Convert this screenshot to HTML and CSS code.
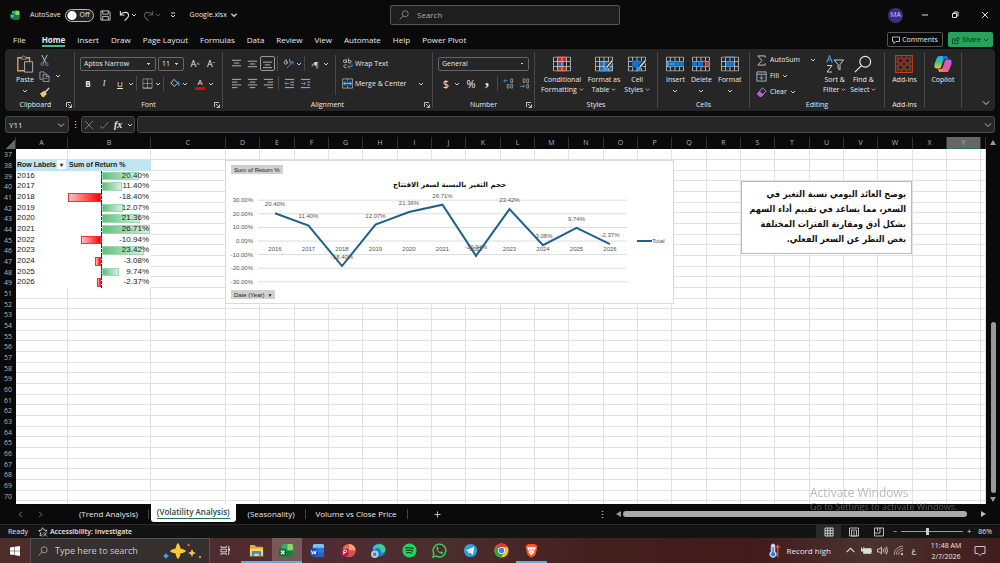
FILE: index.html
```
<!DOCTYPE html>
<html lang="en">
<head>
  <meta charset="UTF-8">
  <title>Google.xlsx - Excel</title>
  <link rel="stylesheet" href="styles.css">
</head>
<body>
  <svg class="defs" aria-hidden="true">
    <symbol id="chev" viewBox="0 0 6 6"><path d="M1 2l2 2 2-2" fill="none" stroke="currentColor"/></symbol>
    <symbol id="launch" viewBox="0 0 6 6"><path d="M5 .5H.5V5M2 2l3 3M5.500 2.500v3h-3" fill="none" stroke="currentColor" stroke-width=".8"/></symbol>
    <symbol id="glass" viewBox="0 0 20 20"><path d="M8 12L1 19" fill="none" stroke="currentColor" stroke-width="1.300"/><circle cx="12.500" cy="7.500" r="6" fill="none" stroke="currentColor" stroke-width="1.300"/></symbol>
    <symbol id="grid" viewBox="0 0 18 15"><path d="M.5.5h17v14H.5zM.5 5h17M.5 10h17M4.500.5v14M9 .5v14M13.500.5v14" fill="none" stroke="#b8b8b8" stroke-width=".9"/></symbol>
    <symbol id="excel" viewBox="0 0 16 16"><rect x="3" y="1" width="12" height="14" rx="2" fill="#2fae5f"/><path d="M9 1h4a2 2 0 012 2v5H9z" fill="#8bd86a"/><path d="M3 8h12v5a2 2 0 01-2 2H5a2 2 0 01-2-2z" fill="#1c7f42"/><rect y="6" width="8" height="8" rx="1.500" fill="#0f6b37"/><path d="M2.200 8l3.600 4M5.800 8l-3.600 4" stroke="#fff" stroke-width="1.200"/></symbol>
  </svg>

  <header class="titlebar">
    <div class="title-left">
      <svg class="app-icon"><use href="#excel"/></svg>
      <label class="autosave">AutoSave <input type="checkbox" class="toggle" role="switch"><span class="off">Off</span></label>
      <button class="tool save" aria-label="Save"><svg viewBox="0 0 12 12"><path d="M1 1h8.500L11 2.500V11H1zM3 1v3.500h6V1M3 11V7h6v4" fill="none" stroke="#ccc"/></svg></button>
      <button class="tool" aria-label="Undo"><svg viewBox="0 0 12 12"><path d="M1.500 1v4.500H6M1.500 5.500C4 1.500 10.500 1.500 10.500 6c0 2-2 3.500-4.500 5.500" fill="none" stroke="#ddd" stroke-width="1.200"/></svg></button>
      <svg class="chev"><use href="#chev"/></svg>
      <button class="tool dim" aria-label="Redo"><svg viewBox="0 0 12 12"><path d="M10.500 1v4.500H6M10.500 5.500C8 1.500 1.500 1.500 1.500 6c0 2 2 3.500 4.500 5.500" fill="none" stroke="#555" stroke-width="1.200"/></svg></button>
      <svg class="chev dim"><use href="#chev"/></svg>
      <button class="tool more" aria-label="Customize toolbar"><svg viewBox="0 0 6 6"><path d="M1 1h4M1 3l2 2 2-2" fill="none" stroke="#ddd"/></svg></button>
      <button class="filename">Google.xlsx <svg class="chev"><use href="#chev"/></svg></button>
    </div>
    <label class="search"><svg><use href="#glass"/></svg><input type="search" placeholder="Search" aria-label="Search"></label>
    <div class="title-right">
      <button class="avatar">MA</button>
      <button class="win" aria-label="Minimize"><svg viewBox="0 0 8 8"><path d="M1 4h6" stroke="#ddd"/></svg></button>
      <button class="win" aria-label="Restore"><svg viewBox="0 0 8 8"><path d="M1.500 2.500h4v4h-4zM3 2.500V1h4v4H5.500" fill="none" stroke="#ddd"/></svg></button>
      <button class="win" aria-label="Close"><svg viewBox="0 0 8 8"><path d="M1 1l6 6M7 1L1 7" stroke="#ddd"/></svg></button>
    </div>
  </header>

  <nav class="tabs">
    <a href="#" class="file">File</a><a href="#" class="active">Home</a><a href="#">Insert</a><a href="#">Draw</a><a href="#">Page Layout</a><a href="#">Formulas</a><a href="#">Data</a><a href="#">Review</a><a href="#">View</a><a href="#">Automate</a><a href="#">Help</a><a href="#">Power Pivot</a>
    <button class="comments"><svg viewBox="0 0 8 8"><path d="M.5 1h7v4.500H4l-2 2v-2H.5z" fill="none" stroke="#ddd" stroke-width=".8"/></svg>Comments</button>
    <button class="share"><svg viewBox="0 0 8 8"><path d="M3 3H.5v4.500H6V6M2.500 5.500c0-2 1-3 3-3V1l2 2.300-2 2.200V4c-1.500 0-2 .5-3 1.500z" fill="none" stroke="#103820" stroke-width=".8"/></svg>Share <svg class="chev"><use href="#chev"/></svg></button>
  </nav>

  <section class="ribbon">
    <div class="group clipboard">
      <div class="group-body">
        <button class="big"><svg viewBox="0 0 18 20"><path d="M5 3H1v14.500h7M11 3h3v4" fill="none" stroke="#e8a33d" stroke-width="1.500"/><path d="M4.500 4.500v-2H6L7.500.7 9 2.500h2v2z" fill="#262626" stroke="#bbb" stroke-width=".8"/><path d="M8.500 7.500h9v11.500h-9z" fill="#262626" stroke="#bbb"/></svg><span>Paste</span><svg class="chev"><use href="#chev"/></svg></button>
        <div class="col">
          <button aria-label="Cut"><svg class="i" viewBox="0 0 12 12"><path d="M3 0l4.500 8.500M9 0L4.500 8.500" stroke="#ccc" fill="none"/><circle cx="3.500" cy="10" r="1.500" fill="none" stroke="#3a96dd"/><circle cx="8.500" cy="10" r="1.500" fill="none" stroke="#3a96dd"/></svg></button>
          <button aria-label="Copy"><svg class="i" viewBox="0 0 12 12"><path d="M4 9H1V1h4.500L7 2.500M4.500 3.500h4l2.500 2.500v5.500H4.500zM8 3.500V6h3M6 8h3" fill="none" stroke="#bbb" stroke-width=".8"/></svg></button>
          <button aria-label="Format Painter"><svg class="i" viewBox="0 0 12 12"><path d="M1 7l4-2.500L8 8l-3 3.500L3 10z" fill="#f0c75e"/><path d="M5 4.500L8 8M7 5.500L11 1" stroke="#ddd" stroke-width="1.500"/></svg></button>
        </div>
        <svg class="chev mid"><use href="#chev"/></svg>
      </div>
      <h2>Clipboard</h2><svg class="launch"><use href="#launch"/></svg>
    </div>

    <div class="group font">
      <div class="group-body rows">
        <div class="row">
          <select class="font-name" aria-label="Font"><option>Aptos Narrow</option></select>
          <select class="font-size" aria-label="Font size"><option>11</option></select>
          <button class="glyph grow" aria-label="Increase font size">A<sup>^</sup></button>
          <button class="glyph grow" aria-label="Decrease font size">A<sup>ˇ</sup></button>
        </div>
        <div class="row">
          <button class="glyph"><b>B</b></button><button class="glyph serif"><i>I</i></button><button class="glyph"><u>U</u></button><svg class="chev"><use href="#chev"/></svg>
          <hr>
          <button class="glyph" aria-label="Borders"><svg class="i" viewBox="0 0 12 12"><path d="M1 1h10v10M1 1v10M6 1v10M1 6h10" fill="none" stroke="#999" stroke-width=".8"/><path d="M1 11h10" stroke="#ddd"/></svg></button><svg class="chev"><use href="#chev"/></svg>
          <hr>
          <button class="glyph" aria-label="Fill color"><svg class="i" viewBox="0 0 12 12"><path d="M5.500 1.500l4 4L6 9 2 5.500z" fill="none" stroke="#ccc"/><path d="M9.500 4c2 2 1.500 4 .5 4" fill="none" stroke="#3a96dd" stroke-width="1.500"/></svg></button><svg class="chev"><use href="#chev"/></svg>
          <button class="glyph color" aria-label="Font color">A</button><svg class="chev"><use href="#chev"/></svg>
        </div>
      </div>
      <h2>Font</h2><svg class="launch"><use href="#launch"/></svg>
    </div>

    <div class="group alignment">
      <div class="group-body">
        <div class="rows">
          <div class="row">
            <button class="glyph" aria-label="Top align"><svg class="i" viewBox="0 0 12 12"><path d="M1 2.500h10M3 5.500h6M1 8.500h10" stroke="#bbb"/></svg></button>
            <button class="glyph" aria-label="Middle align"><svg class="i" viewBox="0 0 12 12"><path d="M1 3.500h10M3 6.500h6M1 9.500h10" stroke="#bbb"/></svg></button>
            <button class="glyph on" aria-label="Bottom align"><svg class="i" viewBox="0 0 12 12"><path d="M1 4.500h10M3 7.500h6M1 10.500h10" stroke="#bbb"/></svg></button>
            <hr>
            <button class="glyph" aria-label="Orientation"><svg class="i" viewBox="0 0 12 12"><circle cx="3" cy="5" r="1.700" fill="none" stroke="#bbb"/><path d="M5 6l-2-5M7 1l1 5" fill="none" stroke="#bbb" stroke-width=".8"/><path d="M4 11l6.500-6.500M8 4h3v3" fill="none" stroke="#3a96dd"/></svg></button><svg class="chev"><use href="#chev"/></svg>
            <hr>
            <button class="glyph" aria-label="Text direction">›¶</button><svg class="chev"><use href="#chev"/></svg>
          </div>
          <div class="row">
            <button class="glyph" aria-label="Align left"><svg class="i" viewBox="0 0 12 12"><path d="M1 1.500h10M1 4.500h6M1 7.500h10M1 10.500h6" stroke="#bbb"/></svg></button>
            <button class="glyph" aria-label="Center"><svg class="i" viewBox="0 0 12 12"><path d="M1 1.500h10M3 4.500h6M1 7.500h10M3 10.500h6" stroke="#bbb"/></svg></button>
            <button class="glyph" aria-label="Align right"><svg class="i" viewBox="0 0 12 12"><path d="M1 1.500h10M5 4.500h6M1 7.500h10M5 10.500h6" stroke="#bbb"/></svg></button>
            <hr>
            <button class="glyph" aria-label="Decrease indent"><svg class="i" viewBox="0 0 12 12"><path d="M1 1.500h10M7 4.500h4M7 7.500h4M1 10.500h10" stroke="#bbb"/><path d="M6 6H1M3 4L1 6l2 2" fill="none" stroke="#3a96dd"/></svg></button>
            <button class="glyph" aria-label="Increase indent"><svg class="i" viewBox="0 0 12 12"><path d="M1 1.500h10M8 4.500h3M8 7.500h3M1 10.500h10" stroke="#bbb"/><path d="M1 6h5M4 4l2 2-2 2" fill="none" stroke="#3a96dd"/></svg></button>
          </div>
        </div>
        <div class="divider"></div>
        <div class="rows wrap">
          <div class="row"><button class="text"><svg class="i" viewBox="0 0 12 12"><circle cx="3" cy="3.500" r="1.500" fill="none" stroke="#bbb"/><path d="M4.700 1.500v4M7 0v5.500" stroke="#bbb" stroke-width=".9"/><circle cx="8.500" cy="4" r="1.500" fill="none" stroke="#bbb"/><path d="M5 7.500c-4-1-4 4 0 3" fill="none" stroke="#bbb"/><path d="M11 6v3.500H6.500M8.500 7.500l-2 2 2 2" fill="none" stroke="#3a96dd"/></svg>Wrap Text</button></div>
          <div class="row"><button class="text"><svg class="i" viewBox="0 0 12 12"><path d="M.5 1h11v10H.5zM6 1v2M6 9v2" fill="none" stroke="#bbb" stroke-width=".8"/><path d="M1 3.500h10v5H1z" fill="#17568c"/><path d="M2 6h8M3.500 4.500L2 6l1.500 1.500M8.500 4.500L10 6 8.500 7.500" fill="none" stroke="#6fbcf5"/></svg>Merge &amp; Center</button><svg class="chev"><use href="#chev"/></svg></div>
        </div>
      </div>
      <h2>Alignment</h2><svg class="launch"><use href="#launch"/></svg>
    </div>

    <div class="group number">
      <div class="group-body rows">
        <div class="row"><select class="format" aria-label="Number format"><option>General</option></select></div>
        <div class="row">
          <button class="glyph sym">$</button><svg class="chev"><use href="#chev"/></svg><button class="glyph sym percent">%</button><button class="glyph sym comma">,</button>
          <hr>
          <button class="glyph" aria-label="Increase decimal"><svg class="i" viewBox="0 0 12 12"><path d="M5 3H1M2.500 1.500L1 3l1.500 1.500" fill="none" stroke="#3a96dd"/><path d="M8.500 1h2v4h-2zM4.500 7h2v4h-2zM8.500 7h2v4h-2z" fill="none" stroke="#aaa" stroke-width=".8"/></svg></button>
          <button class="glyph" aria-label="Decrease decimal"><svg class="i" viewBox="0 0 12 12"><path d="M1 9h5M4.500 7.500L6 9l-1.500 1.500" fill="none" stroke="#3a96dd"/><path d="M4.500 1h2v4h-2zM8.500 1h2v4h-2zM8.500 7h2v4h-2z" fill="none" stroke="#aaa" stroke-width=".8"/></svg></button>
        </div>
      </div>
      <h2>Number</h2><svg class="launch"><use href="#launch"/></svg>
    </div>

    <div class="group styles">
      <div class="group-body">
        <button class="big"><svg viewBox="0 0 18 15"><path d="M4 0h9v5H4zM4 10h9v5H4z" fill="#d8261c"/><path d="M4 5h5v5H4z" fill="#1f6fc0"/><path d="M9 5h2v5H9z" fill="#d8261c"/><use href="#grid"/></svg><span>Conditional<br>Formatting <svg class="chev"><use href="#chev"/></svg></span></button>
        <button class="big"><svg viewBox="0 0 18 15"><path d="M4 5h14v10H4z" fill="#1673c4"/><use href="#grid"/><path d="M17.500 4l-6 7" stroke="#262626" stroke-width="3.500"/><path d="M17.500 4l-6 7" stroke="#ddd" stroke-width="1.500"/><path d="M12 10c-3 0-3 3-5.500 4.500 3 1 6 0 6.500-3z" fill="#3a9be8"/></svg><span>Format as<br>Table <svg class="chev"><use href="#chev"/></svg></span></button>
        <button class="big"><svg viewBox="0 0 18 15"><use href="#grid"/><path d="M4 4h10v7H4z" fill="#1673c4"/><path d="M17.500 4l-6 7" stroke="#262626" stroke-width="3.500"/><path d="M17.500 4l-6 7" stroke="#ddd" stroke-width="1.500"/><path d="M12 10c-3 0-3 3-5.500 4.500 3 1 6 0 6.500-3z" fill="#3a9be8"/></svg><span>Cell<br>Styles <svg class="chev"><use href="#chev"/></svg></span></button>
      </div>
      <h2>Styles</h2>
    </div>

    <div class="group cells">
      <div class="group-body">
        <button class="big"><svg viewBox="0 0 18 15"><use href="#grid"/><path d="M4 5h14v5H4z" fill="#1673c4"/><path d="M9 7.500H1M4 4L.8 7.500 4 11" fill="none" stroke="#3a9be8" stroke-width="1.500"/></svg><span>Insert</span><svg class="chev"><use href="#chev"/></svg></button>
        <button class="big"><svg viewBox="0 0 18 15"><use href="#grid"/><path d="M0 5h5v5H0zM6 5h5v5H6z" fill="#1673c4"/><path d="M12 4.500l6 6M18 4.500l-6 6" stroke="#e0443a" stroke-width="1.400"/></svg><span>Delete</span><svg class="chev"><use href="#chev"/></svg></button>
        <button class="big"><svg viewBox="0 0 18 15"><use href="#grid"/><path d="M5 5h8v5H5z" fill="#1673c4"/><path d="M4 .6h10" stroke="#3a9be8" stroke-width="1.200"/></svg><span>Format</span><svg class="chev"><use href="#chev"/></svg></button>
      </div>
      <h2>Cells</h2>
    </div>

    <div class="group editing">
      <div class="group-body">
        <div class="col lines">
          <button class="text"><svg class="i" viewBox="0 0 12 12"><path d="M10 3V1H2l4.500 5L2 11h8V9" fill="none" stroke="#ccc"/></svg>AutoSum<svg class="chev far"><use href="#chev"/></svg></button>
          <button class="text"><svg class="i" viewBox="0 0 12 12"><path d="M1 1h10v10H1zM1 3.500h10" fill="none" stroke="#bbb"/><path d="M6 4v5M4 7l2 2 2-2" fill="none" stroke="#3a96dd" stroke-width="1.200"/></svg>Fill <svg class="chev"><use href="#chev"/></svg></button>
          <button class="text"><svg class="i" viewBox="0 0 12 12"><path d="M7 1l4 3.500L6.500 10H4L1.500 7.500z" fill="none" stroke="#d08be0"/><path d="M4 4.500l4 3.500-2 2.500H4L1.500 8z" fill="#b65fcf"/></svg>Clear <svg class="chev"><use href="#chev"/></svg></button>
        </div>
        <button class="big sort"><svg viewBox="0 0 18 18"><path d="M.7 7.500L3.500.7l2.800 6.800M1.700 5h3.600" fill="none" stroke="#3a96dd" stroke-width="1.200"/><path d="M1 10.500h5L1 17h5" fill="none" stroke="#ccc"/><path d="M8 5h9.500L14 9.500V15l-2-1.500v-4z" fill="none" stroke="#ccc"/></svg><span>Sort &amp;<br>Filter <svg class="chev"><use href="#chev"/></svg></span></button>
        <button class="big"><svg><use href="#glass"/></svg><span>Find &amp;<br>Select <svg class="chev"><use href="#chev"/></svg></span></button>
      </div>
      <h2>Editing</h2>
    </div>

    <div class="group addins">
      <div class="group-body">
        <button class="big"><svg viewBox="0 0 18 18"><path d="M.7.7h16.600v16.600H.7z" fill="none" stroke="#c43e1c" stroke-width="1.200"/><path d="M3 3h5v5H3zM10 3h5v5h-5zM3 10h5v5H3zM10 10h5v5h-5z" fill="none" stroke="#c43e1c"/></svg><span>Add-ins</span></button>
      </div>
      <h2>Add-ins</h2>
    </div>

    <div class="group copilot">
      <div class="group-body">
        <button class="big"><svg viewBox="0 0 20 20">
          <defs>
            <linearGradient id="cp1" x1="0" y1="0" x2="0" y2="1"><stop offset="0" stop-color="#2aa7f0"/><stop offset=".5" stop-color="#35c78a"/><stop offset="1" stop-color="#f2c531"/></linearGradient>
            <linearGradient id="cp2" x1="1" y1="0" x2="0" y2="1"><stop offset="0" stop-color="#a46bf5"/><stop offset=".5" stop-color="#e855a0"/><stop offset="1" stop-color="#ff8a4c"/></linearGradient>
          </defs>
          <path d="M6 1h7c2 0 2 1.500 2.500 3.500h-3c-1.500 0-2 1-2.500 2.500L8 13c-.5 1.500-1 2-2.500 2H3c-3 0-3-3-2-6l2-5c.7-2 1.500-3 3-3z" fill="url(#cp1)"/>
          <path d="M14 19H7c-2 0-2-1.500-2.500-3.500h3c1.500 0 2-1 2.500-2.500L12 7c.5-1.500 1-2 2.500-2H17c3 0 3 3 2 6l-2 5c-.7 2-1.500 3-3 3z" fill="url(#cp2)"/>
          <path d="M9.500 1H13c2 0 2 1.500 2.500 3.500h-3c-1 0-1.700.5-2 1z" fill="#2467d8"/></svg><span>Copilot</span></button>
      </div>
    </div>
    <button class="collapse" aria-label="Collapse ribbon"><svg viewBox="0 0 8 8"><path d="M1 2.500l3 3 3-3" fill="none" stroke="#ddd"/></svg></button>
  </section>

  <div class="formula-bar">
    <label class="name-box"><input type="text" value="Y11" aria-label="Name box"><svg viewBox="0 0 8 8"><path d="M1 2.500l3 3 3-3" fill="none" stroke="#bbb"/></svg></label>
    <span class="dots">⋮</span>
    <div class="fx-box">
      <button aria-label="Cancel"><svg viewBox="0 0 10 10"><path d="M1 1l8 8M9 1L1 9" stroke="#777"/></svg></button>
      <button aria-label="Enter"><svg viewBox="0 0 10 10"><path d="M1 6l2.500 2.500L9.500 2" fill="none" stroke="#777"/></svg></button>
      <button class="fx">fx</button>
      <svg class="chev"><use href="#chev"/></svg>
    </div>
    <label class="formula"><input type="text" aria-label="Formula"><svg viewBox="0 0 8 8"><path d="M1 2.500l3 3 3-3" fill="none" stroke="#bbb"/></svg></label>
  </div>

  <main class="workspace">
    <div class="sheet">
      <table id="grid-table" class="cells-table"></table>

      <section class="chart">
        <button class="field">Sum of Return %</button>
        <h3 dir="rtl">حجم التغير بالنسبة لسعر الافتتاح</h3>
        <svg id="plot" viewBox="0 0 447 96"></svg>
        <button class="field">Date (Year) <span>▼</span></button>
      </section>

      <p class="note" dir="rtl">يوضح العائد اليومي نسبة التغير في<br>السعر، مما يساعد في تقييم أداء السهم<br>بشكل أدق ومقارنة الفترات المختلفة<br>بغض النظر عن السعر الفعلي.</p>
    </div>
    <div class="vscroll"><span class="arrow up"></span><span class="track"><span class="thumb"></span></span><span class="arrow down"></span></div>
  </main>

  <nav class="sheet-tabs">
    <button class="step" aria-label="Previous sheet"><svg viewBox="0 0 8 8"><path d="M5.500 1l-3 3 3 3" fill="none" stroke="#888"/></svg></button>
    <button class="step" aria-label="Next sheet"><svg viewBox="0 0 8 8"><path d="M2.500 1l3 3-3 3" fill="none" stroke="#888"/></svg></button>
    <a href="#" class="first">(Trend Analysis)</a>
    <a href="#" class="active"><span>(Volatility Analysis)</span></a>
    <a href="#">(Seasonality)</a>
    <a href="#">Volume vs Close Price</a>
    <button class="add" aria-label="New sheet"><svg viewBox="0 0 8 8"><path d="M4 .5v7M.5 4h7" stroke="#ccc"/></svg></button>
    <div class="hscroll"><span class="dots">⋮</span><span class="arrow left"></span><span class="bar"></span><span class="arrow right"></span></div>
  </nav>

  <footer class="status">
    <span>Ready</span>
    <button class="access"><svg viewBox="0 0 10 10"><path d="M4.500.7L6 3l3 .3L7 5.500M4.500.7L3.300 3.300.7 3.500l2 2L2 9l2.500-1.500M5 5.500l4 4M9 5.500l-4 4" fill="none" stroke="#ccc" stroke-width=".9"/></svg>Accessibility: Investigate</button>
    <div class="views">
      <button class="on" aria-label="Normal"><svg viewBox="0 0 10 10"><path d="M1 1h8v8H1zM3.700 1v8M6.300 1v8M1 3.700h8M1 6.300h8" fill="none" stroke="#ddd" stroke-width=".9"/></svg></button>
      <button aria-label="Page layout"><svg viewBox="0 0 10 10"><path d="M.5 1h9v8h-9zM2.500 3h5v6h-5zM4 5h2M4 7h2" fill="none" stroke="#ccc" stroke-width=".9"/></svg></button>
      <button aria-label="Page break preview"><svg viewBox="0 0 10 10"><path d="M.5 1h9v8h-9zM.5 6H6V1M3.500 1v3" fill="none" stroke="#ccc" stroke-width=".9"/></svg></button>
    </div>
    <div class="zoom"><span>−</span><input type="range" min="10" max="190" value="86" aria-label="Zoom"><span>+</span><span class="pct">86%</span></div>
  </footer>

  <div class="watermark"><p>Activate Windows</p><small>Go to Settings to activate Windows.</small></div>

  <footer class="taskbar">
    <button class="start" aria-label="Start"><svg viewBox="0 0 10 10"><path d="M0 1.400L4.500.8v3.900H0zM5 .7L10 0v4.700H5zM0 5.200h4.500v3.900L0 8.500zM5 5.200h5V10l-5-.7z" fill="#fff"/></svg></button>
    <label class="task-search"><svg><use href="#glass"/></svg><input type="search" placeholder="Type here to search" aria-label="Type here to search">
      <svg class="sparkle" viewBox="0 0 40 16"><path d="M15 0q1.500 1 2.500 5.500Q22 6.500 23 8q-1 1.500-5.500 2.500Q16.500 15 15 16q-1.500-1-2.500-5.500Q8 9.500 7 8q1-1.500 5.500-2.500Q13.500 1 15 0z" fill="#f9c932"/><path d="M29 6l1.200 2.800L33 10l-2.800 1.200L29 14l-1.200-2.800L25 10l2.800-1.200z" fill="#f5c34a"/><path d="M3 10l1.200 1.800L6 13l-1.800 1.200L3 16l-1.200-1.800L0 13l1.800-1.200z" fill="#39a7e8"/><circle cx="25.500" cy="2" r="1.300" fill="#d8573c"/><circle cx="37" cy="14" r="1.200" fill="#b5a33b"/></svg></label>
    <button class="taskview" aria-label="Task view"><svg viewBox="0 0 12 12"><path d="M1 1v1.500h6V1M1 11V9.500h6V11M1 4.500h6v3H1zM9.500 1v10" fill="none" stroke="#ddd"/><path d="M9 4h2v2H9z" fill="#ddd"/></svg></button>
    <div class="apps">
      <button class="run" aria-label="File Explorer"><svg viewBox="0 0 16 16"><path d="M1 3a1 1 0 011-1h4l1.500 2H14a1 1 0 011 1v9H1z" fill="#e9a825"/><path d="M1 6h14v8H1z" fill="#fcd462"/><path d="M3 14V10a1.500 1.500 0 011.500-1.500h7A1.500 1.500 0 0113 10v4h-2.500v-2.500h-5V14z" fill="#3a8fd8"/></svg></button>
      <button class="run open" aria-label="Excel"><svg viewBox="0 0 16 16"><use href="#excel"/></svg></button>
      <button aria-label="Word"><svg viewBox="0 0 16 16"><rect x="3" y="1" width="12" height="14" rx="2" fill="#2b7cd3"/><path d="M3 5V3a2 2 0 012-2h8a2 2 0 012 2v2z" fill="#7cc0f8"/><path d="M3 10h12v3a2 2 0 01-2 2H5a2 2 0 01-2-2z" fill="#2462d8"/><rect y="6" width="8" height="8" rx="1.500" fill="#1750b0"/><path d="M1.500 8l1.200 4L4 8.500 5.300 12l1.200-4" fill="none" stroke="#fff"/></svg></button>
      <button aria-label="PowerPoint"><svg viewBox="0 0 16 16"><circle cx="8.500" cy="8" r="7" fill="#ed6c47"/><path d="M8.500 1a7 7 0 017 7h-7z" fill="#ff9e7a"/><path d="M8.500 8h7a7 7 0 01-7 7z" fill="#e0485a"/><rect y="6" width="8" height="8" rx="1.500" fill="#b01245"/><path d="M3 12.500v-5h1.500a1.400 1.400 0 010 2.800H3" fill="none" stroke="#fff"/></svg></button>
      <button aria-label="Edge"><svg viewBox="0 0 16 16"><circle cx="8.500" cy="7.500" r="7" fill="#1480cf"/><path d="M2 6c1-6 13-7 13.500 1 0 3-3 4-5 3 1-2-1-5-4-5-2 0-3.500.5-4.500 1z" fill="#42cf8c"/><path d="M2 6c2-5 9-5 10-1-2-1-4-2-6 0S2 7 2 6z" fill="#36c0dd"/><circle cx="4" cy="12" r="4" fill="#b9cad6"/><path d="M2.500 10.500h3v3h-3z" fill="#4a7890"/></svg></button>
      <button aria-label="Spotify"><svg viewBox="0 0 16 16"><circle cx="8" cy="8" r="7.500" fill="#1ed760"/><path d="M3.500 5.500c3-1 6.500-.6 9 .8M4 8c2.500-.8 5.500-.5 7.700.8M4.500 10.500c2-.6 4.300-.4 6.200.7" fill="none" stroke="#173a23" stroke-width="1.300"/></svg></button>
      <button aria-label="WhatsApp"><svg viewBox="0 0 16 16"><path d="M1 15l1-3.700A6.800 6.800 0 114.700 14z" fill="none" stroke="#3ccf62" stroke-width="1.500"/><path d="M5 4.500c1-1 1.500 0 2 1.500L6 7.200c.6 1.200 1.500 2 2.700 2.600L10 8.800c1.500.7 2 1 1.500 2C9.500 13 3.500 8 5 4.500z" fill="#3ccf62"/></svg></button>
      <button aria-label="Telegram"><svg viewBox="0 0 16 16"><circle cx="8" cy="8" r="7" fill="#2ba0dc"/><path d="M3 8l9-4-1.500 8.500L7.500 10 6 11.500V9z" fill="#fff"/><path d="M6 9l5-4-3.500 5z" fill="#bcdcf0"/></svg></button>
      <button aria-label="Chrome"><svg viewBox="0 0 16 16"><circle cx="8" cy="8" r="7.500" fill="#fbc116"/><path d="M8 8L1.500 4.200A7.500 7.500 0 0114.500 4.500H8z" fill="#e33b2e"/><path d="M8 8l-6.500-3.800A7.500 7.500 0 007.500 15.500L11 9.500z" fill="#2ba24c"/><circle cx="8" cy="8" r="3.700" fill="#fff"/><circle cx="8" cy="8" r="2.900" fill="#3f7fe8"/></svg></button>
      <button class="run" aria-label="Brave"><svg viewBox="0 0 16 16"><path d="M4.500 1h7l1.500 1.500 1.500.5-.7 2 .2 1-2 7L8 15.700 4 13 2 6l.2-1-.7-2L3 2.500z" fill="#fb542b"/><path d="M4 4l2 .5L8 4l2 .5 2-.5.5 1.500-1.700 3L11 10l-3 3-3-3 .2-1.500-1.700-3z" fill="#fff"/><path d="M5.500 6l1.700.8L6.500 9zM10.500 6l-1.700.8.7 2.200zM8 9l1 1.500H7z" fill="#fb542b"/></svg></button>
    </div>
    <div class="tray">
      <button class="weather"><svg viewBox="0 0 12 16"><path d="M3 3a2 2 0 014 0v6a3.500 3.500 0 11-4 0z" fill="#e8eef4" stroke="#a9c6e8" stroke-width=".8"/><path d="M5 4v8" stroke="#2c7be0" stroke-width="1.500"/><circle cx="5" cy="12" r="2.300" fill="#2c7be0"/><path d="M10 15V3M8 5l2-2.500L12 5" fill="none" stroke="#d4552a" stroke-width="1.500"/></svg>Record high</button>
      <button aria-label="Hidden icons"><svg viewBox="0 0 10 10"><path d="M1.500 6.500L5 3l3.500 3.500" fill="none" stroke="#ddd"/></svg></button>
      <button aria-label="Battery"><svg viewBox="0 0 10 10"><path d="M2.500 3.500H9v4H2.500z" fill="#ddd" stroke="#ddd"/><path d="M9.800 4.500v2M.5 2v2M2.500 2v2M0 4h3v1.500H0z" stroke="#ddd" fill="#ddd" stroke-width=".8"/></svg></button>
      <button aria-label="Volume"><svg viewBox="0 0 10 10"><path d="M.5 3.700H2L4 2v6L2 6.300H.5zM5.500 3.500q1 1.500 0 3M7 2.500q1.800 2.500 0 5M8.500 1.500q2.400 3.500 0 7" fill="none" stroke="#ddd" stroke-width=".8"/></svg></button>
      <button aria-label="Network"><svg viewBox="0 0 10 10"><path d="M1 9a8 8 0 018-8M3 9a6 6 0 016-6M5 9a4 4 0 014-4" fill="none" stroke="#aaa" stroke-width=".8"/><path d="M7 9a2 2 0 012-2v2z" fill="#ccc"/></svg></button>
      <button class="lang">ع</button>
      <time>11:48 AM<br>2/7/2026</time>
      <button class="notify" aria-label="Notifications"><svg viewBox="0 0 12 12"><path d="M1 1.500h10v7H8L6 10.500l-2-2H1z" fill="none" stroke="#ccc"/></svg></button>
    </div>
  </footer>

  <script>
    const returns = [
      [2016, 20.40], [2017, 11.40], [2018, -18.40], [2019, 12.07], [2020, 21.36], [2021, 26.71],
      [2022, -10.94], [2023, 23.42], [2024, -3.08], [2025, 9.74], [2026, -2.37]
    ];
    const columns = 'ABCDEFGHIJKLMNOPQRSTUVWXY'.split('');
    const MAX = 26.71;

    // Spreadsheet grid, row 50 is hidden
    function buildGrid() {
      let html = '<colgroup><col class="c-head"><col class="c-a"><col class="c-b"><col class="c-c">';
      for (let i = 3; i < columns.length; i++) html += `<col class="${(i - 3) % 3 === 1 ? 'c-wide' : 'c-std'}">`;
      html += '<col></colgroup><thead><tr><th class="corner"></th>';
      columns.forEach(c => html += `<th${c === 'Y' ? ' class="selected"' : ''}>${c}</th>`);
      html += '<th></th></tr></thead><tbody>';
      for (let r = 37; r <= 71; r++) {
        if (r === 50) continue;
        const item = returns[r - 39];
        let a = '<td></td>', b = '<td></td>';
        if (r === 38) {
          a = '<td class="head">Row Labels<button aria-label="Filter">▾</button></td>';
          b = '<td class="head">Sum of Return %</td>';
        } else if (item) {
          const v = item[1];
          const w = Math.abs(v) / MAX * 59;
          a = `<td class="plain">${item[0]}</td>`;
          b = `<td class="plain value"><span class="bar ${v < 0 ? 'neg' : 'pos'}" style="width:${w}%"></span><span class="num">${v.toFixed(2)}%</span></td>`;
        }
        html += `<tr><th>${r}</th>${a}${b}${'<td></td>'.repeat(columns.length - 1)}</tr>`;
      }
      document.getElementById('grid-table').innerHTML = html + '</tbody>';
    }

    function buildPlot() {
      const x = i => 49 + i * 33.5;
      const y = v => 51 - v * 1.36;
      let svg = '';
      for (let v = 30; v >= -30; v -= 10) {
        svg += `<line class="rule" x1="32" x2="401" y1="${y(v)}" y2="${y(v)}"/>`;
        svg += `<text class="axis" x="27" y="${y(v) + 2}">${v.toFixed(2)}%</text>`;
      }
      svg += `<polyline points="${returns.map((d, i) => x(i) + ',' + y(d[1])).join(' ')}"/>`;
      returns.forEach((d, i) => {
        svg += `<text x="${x(i)}" y="61">${d[0]}</text>`;
        svg += `<text x="${x(i)}" y="${y(d[1]) - 7}">${d[1].toFixed(2)}%</text>`;
      });
      svg += '<line class="key" x1="411" x2="426" y1="51" y2="51"/><text class="legend" x="426" y="53">Total</text>';
      document.getElementById('plot').innerHTML = svg;
    }

    buildGrid();
    buildPlot();
  </script>
</body>
</html>
```
FILE: styles.css
```
* {
  box-sizing: border-box;
}
body {
  margin: 0;
  height: 100vh;
  display: flex;
  flex-direction: column;
  overflow: hidden;
  background: #0a0a0a;
  color: #e8e8e8;
  font: 7px/10px "Open Sans", "Noto Sans", sans-serif;
}
button, input, select {
  font: inherit;
  color: inherit;
  background: none;
  border: 0;
  padding: 0;
  margin: 0;
  outline: 0;
}
button {
  display: flex;
  align-items: center;
  justify-content: center;
}
input::placeholder {
  color: inherit;
  opacity: 1;
}
a {
  color: inherit;
  text-decoration: none;
}
svg {
  flex: none;
}
h2, h3, p {
  margin: 0;
  font-size: inherit;
  font-weight: 400;
}
.defs {
  position: absolute;
  width: 0;
  height: 0;
}
.chev {
  width: 6px;
  height: 6px;
  color: #ccc;
}
.i {
  width: 11px;
  height: 11px;
}

/* title bar */
.titlebar {
  display: flex;
  align-items: center;
  height: 30px;
  padding-left: 10px;
}
.title-left, .title-right {
  flex: 1;
  display: flex;
  align-items: center;
}
.app-icon {
  width: 10px;
  height: 10px;
  margin-right: 10px;
}
.autosave {
  display: flex;
  align-items: center;
  gap: 4px;
  position: relative;
}
.toggle {
  appearance: none;
  width: 29px;
  height: 13px;
  border: 1px solid #bbb;
  border-radius: 7px;
  background: radial-gradient(circle at 6px 50%, #fff 4px, transparent 5px) #222;
}
.off {
  position: absolute;
  right: 4px;
}
.tool svg {
  width: 11px;
  height: 11px;
}
.tool.save {
  margin: 0 8px 0 6px;
}
.tool + .chev {
  margin: 0 6px 0 1px;
}
.tool.more {
  margin: 0 14px 0 3px;
}
.tool.more svg {
  width: 6px;
  height: 6px;
}
.chev.dim {
  color: #555;
}
.filename {
  gap: 3px;
}
.filename .chev {
  width: 8px;
  height: 8px;
}
.search {
  display: flex;
  align-items: center;
  gap: 8px;
  width: 230px;
  height: 20px;
  padding: 0 8px;
  border: 1px solid #555;
  border-radius: 2px;
  background: #1e1e1e;
  color: #aaa;
}
.search svg {
  width: 10px;
  height: 10px;
}
.search input {
  flex: 1;
  font-size: 8px;
}
.title-right {
  justify-content: flex-end;
}
.avatar {
  width: 15px;
  height: 15px;
  margin-right: 7px;
  border-radius: 50%;
  background: #3b2e83;
  color: #cfc8ff;
}
.win {
  width: 30px;
  height: 20px;
}
.win svg {
  width: 8px;
  height: 8px;
}

/* ribbon tabs */
.tabs {
  display: flex;
  align-items: center;
  gap: 12px;
  height: 19px;
  padding: 0 7px 0 13px;
}
.tabs a {
  height: 14px;
  padding-top: 2px;
  border-bottom: 2px solid transparent;
  font-size: 8px;
  white-space: nowrap;
}
.tabs .file {
  margin-right: 4px;
}
.tabs .active {
  font-weight: 700;
  border-color: #4fb87f;
}
.comments, .share {
  height: 15px;
  gap: 2px;
  border-radius: 2px;
}
.comments {
  width: 56px;
  margin-left: auto;
  border: 1px solid #555;
}
.share {
  width: 45px;
  margin-left: -7px;
  background: #27a35b;
  color: #0c2c18;
}
.comments svg, .share svg {
  width: 8px;
  height: 8px;
}
.share .chev {
  width: 6px;
  color: #0c2c18;
}

/* ribbon */
.ribbon {
  position: relative;
  display: flex;
  height: 62px;
  margin: 0 5px;
  padding: 3px 0;
  border-radius: 4px;
  background: #262626;
}
.group {
  position: relative;
  display: flex;
  flex-direction: column;
  border-right: 1px solid #484848;
}
.group-body {
  flex: none;
  display: flex;
  height: 48px;
}
.group h2 {
  line-height: 10px;
  text-align: center;
}
.launch {
  position: absolute;
  right: 2px;
  bottom: 0;
  width: 6px;
  height: 6px;
}
.rows {
  display: flex;
  flex-direction: column;
  gap: 5px;
  padding-top: 4px;
}
.row {
  display: flex;
  align-items: center;
  height: 15px;
}
.row hr {
  width: 1px;
  height: 15px;
  margin: 0 2px;
  border: 0;
  background: #484848;
}
.glyph {
  width: 16px;
  height: 15px;
  font-size: 8px;
}
.glyph.serif {
  font-family: "Liberation Serif", serif;
}
.glyph.on {
  width: 15px;
  border: 1px solid #999;
  border-radius: 2px;
}
.glyph.grow {
  font-size: 9px;
}
.glyph sup {
  font-size: 6px;
}
.glyph.sym {
  font-size: 11px;
}
.glyph.percent {
  margin-left: 3px;
}
.glyph.comma {
  font: 700 16px/4px "Liberation Serif", serif;
  padding-bottom: 6px;
}
.glyph.color {
  width: 10px;
  height: 13px;
  margin: 0 3px 0 7px;
  border-bottom: 3px solid #e00;
}
.text {
  gap: 3px;
}
.big {
  flex-direction: column;
  justify-content: flex-start;
  line-height: 10px;
}
.big > svg:first-child {
  width: 18px;
  height: 18px;
  margin: 3px 0 2px;
}
.big > .chev {
  margin-top: 3px;
}
.big span .chev {
  width: 5px;
  height: 5px;
}
.col {
  display: flex;
  flex-direction: column;
  justify-content: space-around;
}
select {
  appearance: none;
  height: 14px;
  padding: 0 3px;
  border: 1px solid #666;
  border-radius: 2px;
  background: linear-gradient(45deg, transparent 50%, #ccc 50%) right 6px center / 2px 2px no-repeat,
    linear-gradient(-45deg, transparent 50%, #ccc 50%) right 4px center / 2px 2px no-repeat;
}
.clipboard {
  width: 70px;
}
.clipboard .group-body {
  gap: 5px;
  padding-left: 11px;
}
.clipboard .mid {
  align-self: center;
}
.clipboard h2 {
  padding-right: 8px;
}
.font {
  width: 148px;
}
.font .group-body {
  padding-left: 5px;
}
.font-name {
  width: 76px;
  margin-right: 2px;
}
.font-size {
  width: 26px;
  margin-right: 3px;
}
.alignment {
  width: 210px;
}
.alignment .group-body {
  padding-left: 5px;
}
.alignment .rows {
  width: 107px;
}
.divider {
  width: 1px;
  height: 40px;
  margin-top: 3px;
  background: #484848;
}
.alignment .wrap {
  width: 96px;
  padding-left: 6px;
}
.alignment .wrap .text {
  gap: 2px;
}
.alignment .wrap .chev {
  margin-left: 12px;
}
.number {
  width: 102px;
}
.number .group-body {
  padding-left: 5px;
}
.format {
  width: 91px;
}
.styles {
  width: 123px;
}
.styles .group-body {
  gap: 4px;
  padding-left: 6px;
}
.cells {
  width: 92px;
}
.cells .group-body {
  gap: 6px;
  padding-left: 8px;
}
.editing {
  width: 135px;
}
.editing .group-body {
  padding-left: 6px;
}
.lines {
  width: 67px;
  align-items: flex-start;
}
.far {
  margin-left: 7px;
}
.sort {
  margin-right: 4px;
}
.addins {
  width: 40px;
}
.copilot {
  width: 37px;
}
.addins .group-body, .copilot .group-body {
  justify-content: center;
}
.collapse {
  margin: auto 5px 0 auto;
  height: 10px;
}
.collapse svg {
  width: 8px;
  height: 8px;
}

/* formula bar */
.formula-bar {
  display: flex;
  height: 17px;
  margin: 5px 5px 4px;
}
.name-box, .fx-box, .formula {
  display: flex;
  align-items: center;
  border: 1px solid #484848;
  border-radius: 3px;
  background: #262626;
}
.name-box {
  width: 64px;
  padding: 0 3px;
}
.name-box input, .formula input {
  flex: 1;
  min-width: 0;
  font-size: 8px;
}
.name-box svg, .formula svg {
  width: 8px;
  height: 8px;
}
.dots {
  width: 12px;
  font-size: 9px;
  line-height: 17px;
  text-align: center;
}
.fx-box {
  width: 54px;
  margin-right: 2px;
  padding: 0 2px;
  gap: 5px;
}
.fx-box button svg {
  width: 10px;
  height: 10px;
}
.fx {
  font: italic 700 10px "Liberation Serif", serif;
}
.formula {
  flex: 1;
  padding: 0 2px;
}

/* sheet */
.workspace {
  flex: 1;
  min-height: 0;
  display: flex;
}
.sheet {
  position: relative;
  flex: 1;
  overflow: hidden;
  background: #fff;
  color: #222;
}
.cells-table {
  width: 100%;
  table-layout: fixed;
  border-collapse: separate;
  border-spacing: 0;
}
.c-head { width: 16px; }
.c-a { width: 52px; }
.c-b { width: 83px; }
.c-c { width: 75px; }
.c-std { width: 34px; }
.c-wide { width: 35px; }
.cells-table th {
  padding: 0;
  background: #0a0a0a;
  color: #b4b4b4;
  font-weight: 400;
  font-size: 7px;
  line-height: 10px;
}
.cells-table thead th {
  height: 12px;
  border-right: 1px solid #333;
}
.cells-table thead .selected {
  background: #666;
  border-bottom: 1px solid #21734a;
}
.cells-table thead .corner {
  background: linear-gradient(135deg, #0a0a0a 65%, #666 65%);
}
.cells-table td {
  height: 11px;
  padding: 0 1px;
  border-right: 1px solid #e2e2e2;
  border-bottom: 1px solid #e2e2e2;
  font: 8px/10px "Liberation Sans", Arial, sans-serif;
  white-space: nowrap;
}
.cells-table tbody tr:nth-child(3n) td {
  height: 10px;
  line-height: 9px;
}
.cells-table tbody tr:nth-child(3n) th {
  line-height: 9px;
}
.cells-table .plain {
  border-color: transparent;
}
.cells-table .head {
  background: #bfe5f1;
  border-color: #bfe5f1;
  font-size: 7px;
  font-weight: 700;
}
.head button {
  float: right;
  width: 9px;
  height: 9px;
  background: #fff;
  font-size: 6px;
}
.value {
  position: relative;
  text-align: right;
}
.value::before {
  content: "";
  position: absolute;
  left: 40%;
  top: 0;
  bottom: -1px;
  border-left: 1px dashed #333;
}
.value .bar {
  position: absolute;
  top: 1px;
  bottom: 0;
}
.pos {
  left: 41%;
  border: 1px solid #9ad8b3;
  background: linear-gradient(90deg, #63be7b, #d8f0e0);
}
.neg {
  right: 60%;
  border: 1px solid #e33;
  background: linear-gradient(270deg, #f00, #ffc4c4);
}
.num {
  position: relative;
}

/* chart */
.chart {
  position: absolute;
  left: 225px;
  top: 23px;
  width: 449px;
  height: 144px;
  padding: 4px 0 0;
  border: 1px solid #d9d9d9;
  background: #fff;
  font-family: "Liberation Sans", Arial, sans-serif;
}
.field {
  height: 9px;
  margin-left: 5px;
  padding: 0 3px;
  background: #d0d0d0;
  font-size: 6px;
}
.field span {
  margin-left: 3px;
  font-size: 5px;
}
.chart h3 {
  height: 16px;
  font: 700 7px/22px "DejaVu Sans", sans-serif;
  text-align: center;
  color: #111;
}
.chart svg {
  display: block;
  width: 447px;
  height: 96px;
  margin-bottom: 4px;
}
.chart text {
  font-size: 6px;
  fill: #555;
  text-anchor: middle;
}
.chart .axis {
  text-anchor: end;
}
.chart .legend {
  text-anchor: start;
}
.rule {
  stroke: #dcdcdc;
}
.chart polyline, .key {
  fill: none;
  stroke: #1f6388;
  stroke-width: 2;
}
.note {
  position: absolute;
  left: 741px;
  top: 44px;
  width: 171px;
  height: 73px;
  padding: 5px;
  border: 1px solid #bbb;
  background: #fff;
  color: #111;
  font: 700 9px/15px "DejaVu Sans Condensed", "DejaVu Sans", sans-serif;
  white-space: nowrap;
}

/* scrollbars */
.vscroll {
  display: flex;
  flex-direction: column;
  align-items: center;
  width: 14px;
  padding: 3px 0 2px;
}
.track {
  flex: 1;
  display: flex;
  flex-direction: column;
  justify-content: flex-end;
  padding-bottom: 4px;
}
.thumb {
  width: 5px;
  height: 49%;
  border-radius: 3px;
  background: #999;
}
.arrow {
  border: 3px solid transparent;
}
.up {
  border-top: 0;
  border-bottom: 5px solid #999;
}
.down {
  border-bottom: 0;
  border-top: 5px solid #999;
}
.left {
  border-left: 0;
  border-right: 5px solid #999;
}
.right {
  border-right: 0;
  border-left: 5px solid #bbb;
}

/* sheet tabs */
.sheet-tabs {
  display: flex;
  height: 20px;
  padding-left: 10px;
  font-size: 8px;
}
.step {
  width: 20px;
}
.step svg, .add svg {
  width: 7px;
  height: 7px;
}
.sheet-tabs a {
  margin: 5px 0;
  padding: 0 10px;
  border-right: 1px solid #444;
}
.sheet-tabs .first {
  margin-left: 19px;
}
.sheet-tabs .active {
  margin: 0 2px;
  height: 18px;
  padding: 3px 6px;
  border: 0;
  border-radius: 0 0 3px 3px;
  background: #fff;
  color: #2b4a3a;
}
.sheet-tabs .active span {
  display: block;
  height: 12px;
  border-bottom: 1px solid #21734a;
  font-weight: 600;
}
.add {
  width: 60px;
}
.hscroll {
  display: flex;
  align-items: center;
  width: 390px;
  margin-left: auto;
  margin-right: 14px;
}
.hscroll .bar {
  flex: 1;
  height: 6px;
  margin: 0 14px 0 2px;
  border-radius: 3px;
  background: #aaa;
}
.hscroll .left {
  margin-left: 8px;
}

/* status bar */
.status {
  display: flex;
  align-items: center;
  height: 14px;
  padding: 0 8px;
  border-top: 1px solid #2a2a2a;
  background: #141414;
}
.access {
  gap: 2px;
  margin-left: 10px;
  font-weight: 600;
}
.access svg, .views svg {
  width: 10px;
  height: 10px;
}
.views {
  display: flex;
  margin-left: auto;
}
.views button {
  width: 25px;
  height: 13px;
}
.views .on {
  background: #2a2a2a;
}
.zoom {
  display: flex;
  align-items: center;
  gap: 4px;
  margin-left: 2px;
}
.zoom input {
  appearance: none;
  width: 62px;
  height: 1px;
  background: #999;
}
.zoom input::-webkit-slider-thumb {
  appearance: none;
  width: 3px;
  height: 7px;
  background: #ccc;
}
.pct {
  margin-left: 3px;
}

/* activation notice */
.watermark {
  position: fixed;
  left: 81%;
  bottom: 50px;
  color: rgba(140, 140, 140, 0.6);
  white-space: nowrap;
}
.watermark p {
  font-size: 12px;
  line-height: 16px;
}
.watermark small {
  display: block;
  font-size: 9px;
  line-height: 12px;
}

/* taskbar */
.taskbar {
  display: flex;
  height: 25px;
  background: linear-gradient(90deg, #4d2d2b, #512b33 33%, #4a2e2c 45%, #431f1e 60%, #421a1b 75%, #4b3330 87%, #421b1c);
  font-size: 8px;
}
.start {
  width: 30px;
}
.start svg {
  width: 10px;
  height: 10px;
}
.task-search {
  display: flex;
  align-items: center;
  gap: 7px;
  width: 180px;
  padding: 0 6px 0 7px;
  border: 1px solid #555;
  border-bottom: 0;
  background: #352f2f;
  color: #ccc;
}
.task-search svg {
  width: 10px;
  height: 10px;
}
.task-search input {
  flex: 1;
  min-width: 0;
  font-size: 9px;
}
.task-search .sparkle {
  width: 40px;
  height: 16px;
}
.taskview {
  width: 31px;
}
.taskview svg {
  width: 11px;
  height: 11px;
}
.apps {
  display: flex;
  width: 306px;
}
.apps button {
  flex: 1;
  border-bottom: 2px solid transparent;
  border-top: 2px solid transparent;
}
.apps svg {
  width: 15px;
  height: 15px;
}
.apps .run {
  border-bottom-color: #6aa7e0;
}
.apps .open {
  background: #775a58;
}
.tray {
  display: flex;
  align-items: center;
  margin-left: auto;
}
.tray button {
  width: 16px;
}
.tray svg {
  width: 11px;
  height: 11px;
}
.tray .weather {
  width: auto;
  gap: 7px;
  margin-right: 11px;
}
.weather svg {
  width: 12px;
  height: 15px;
}
.tray .lang {
  font-family: "DejaVu Sans", sans-serif;
}
time {
  width: 48px;
  line-height: 11px;
  font-size: 7px;
  text-align: center;
}
.tray .notify {
  width: 20px;
  margin-right: 10px;
}
.notify svg {
  width: 12px;
  height: 12px;
}
```
